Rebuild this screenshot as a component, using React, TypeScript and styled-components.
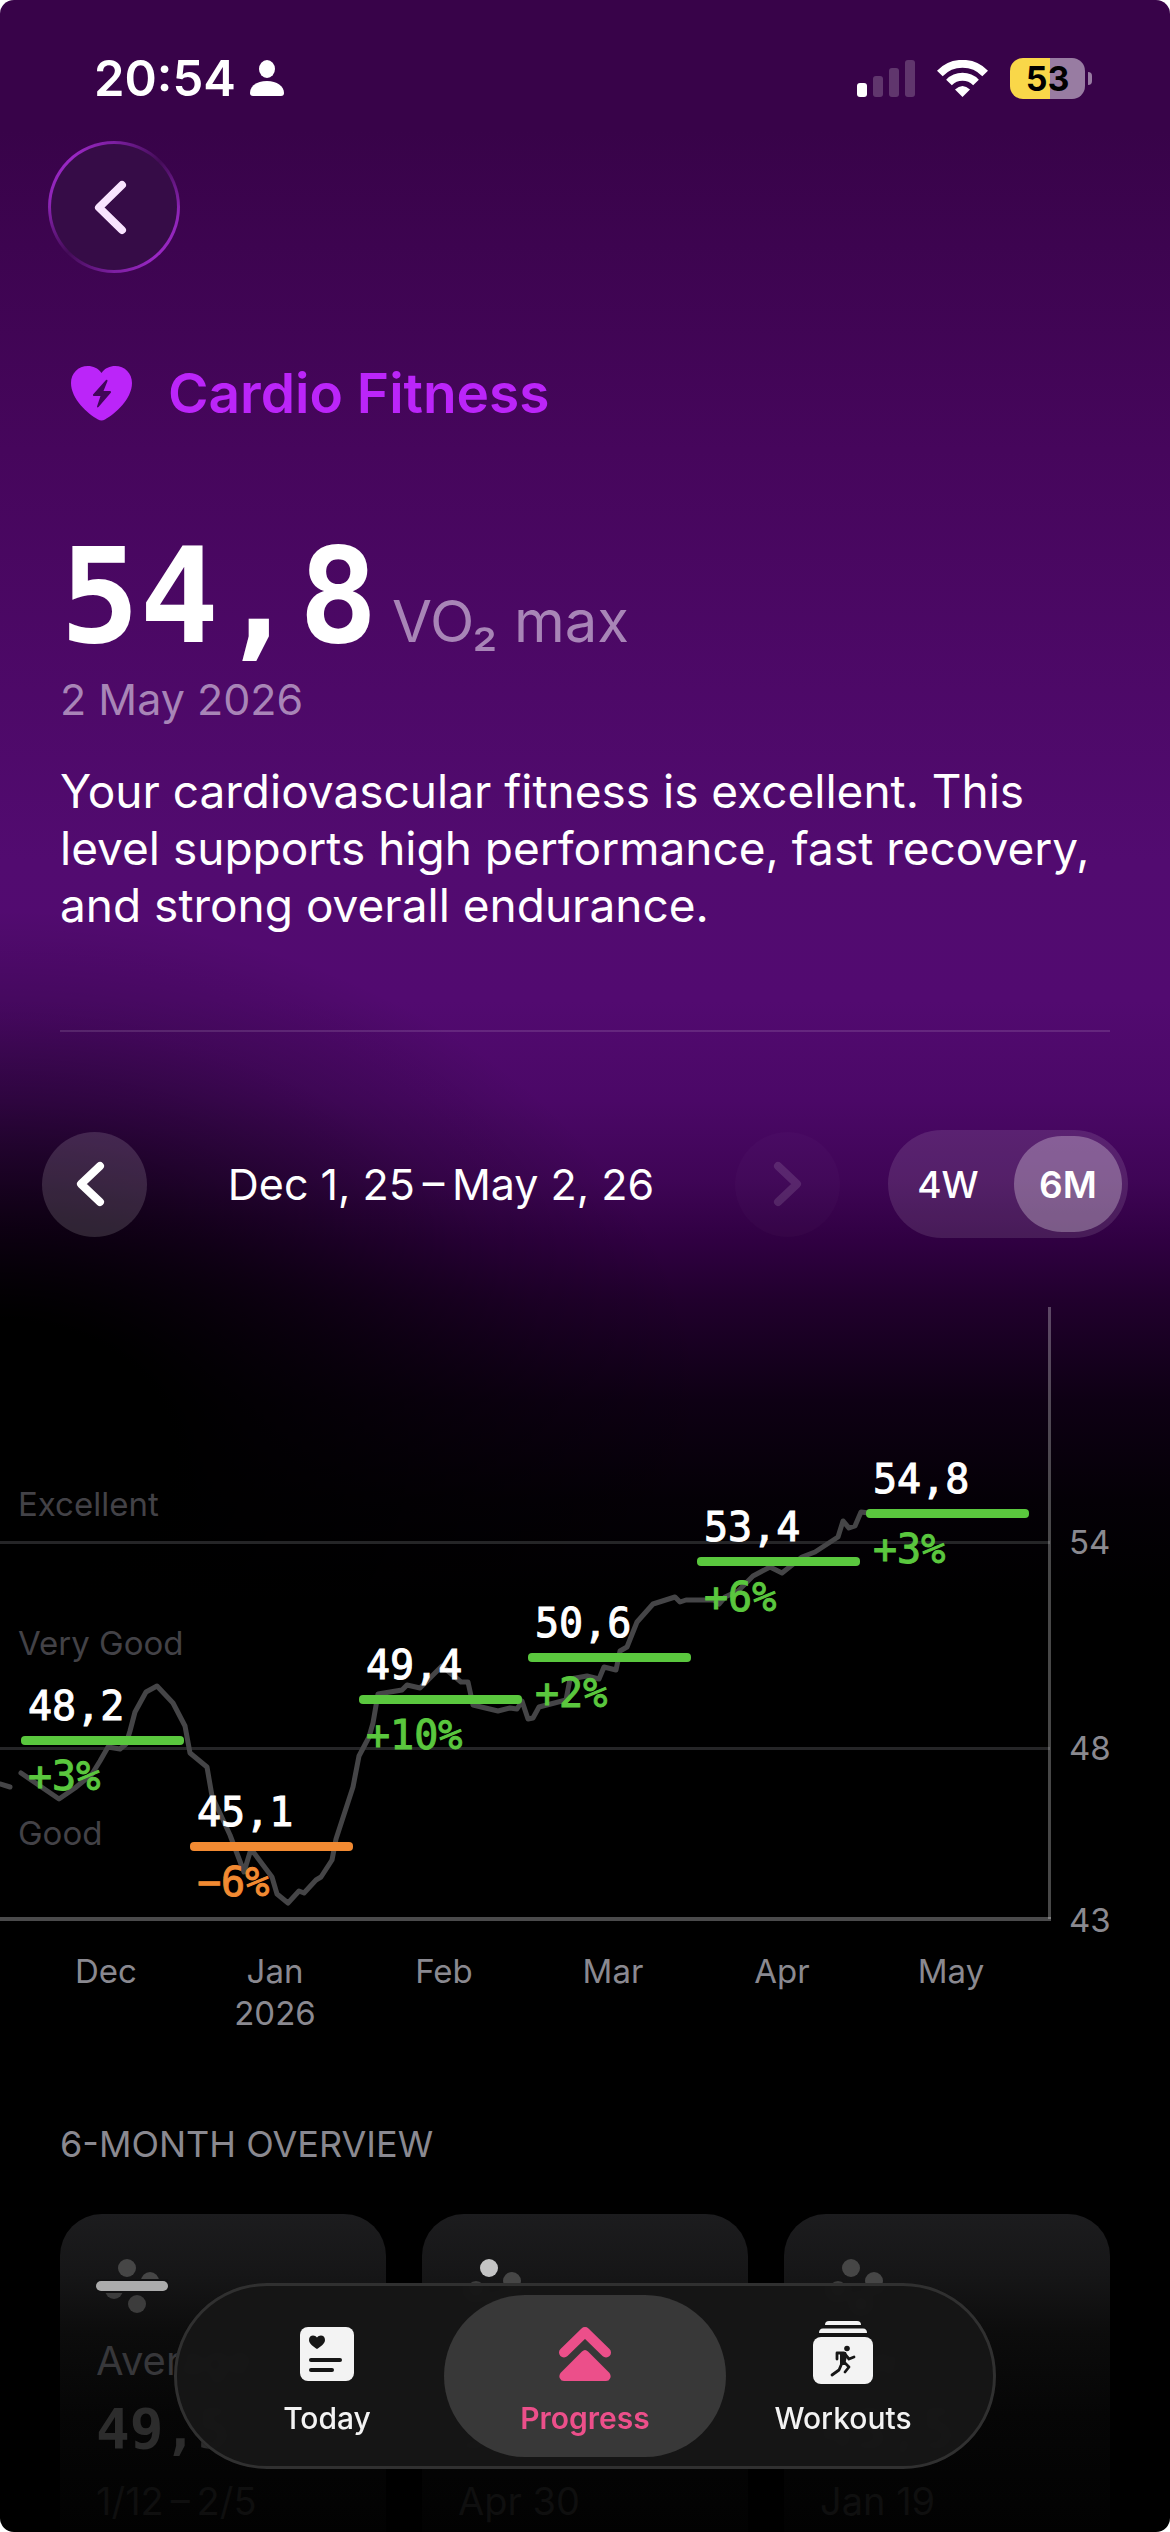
import React from "react";
import styled, { createGlobalStyle, css } from "styled-components";

const GlobalStyle = createGlobalStyle`
  * { box-sizing: border-box; }
  body { margin: 0; background: #fff; }
  button { font: inherit; color: inherit; border: 0; padding: 0; background: none; cursor: pointer; }
  h1, h2, p { margin: 0; font-weight: 400; }
`;

const sans = `Inter, "Liberation Sans", sans-serif`;
const mono = `"DejaVu Sans Mono", "Liberation Mono", monospace`;

const Screen = styled.main`
  position: relative;
  display: flex;
  flex-direction: column;
  height: 100vh;
  overflow: hidden;
  border-radius: 14px;
  color: #fff;
  font-family: ${sans};
  background:
    radial-gradient(ellipse 660px 500px at 0 1450px, #000 26%, rgba(0, 0, 0, 0.8) 40%, rgba(0, 0, 0, 0.64) 52%, rgba(0, 0, 0, 0.4) 69%, rgba(0, 0, 0, 0.18) 86%, rgba(0, 0, 0, 0) 108%),
    linear-gradient(#380349 0, #380349 130px, #46065c 450px, #520b70 860px, #520a70 1000px, #4b0867 1100px, #3f0556 1180px, #300042 1240px, #21002d 1300px, #0e0014 1400px, #040006 1500px, #000 1600px);

  & > * {
    flex: none;
  }
`;

const StatusBar = styled.header`
  display: flex;
  justify-content: space-between;
  align-items: center;
  height: 156px;
  padding: 0 78px 0 94px;
`;

const StatusGroup = styled.div`
  display: flex;
  align-items: center;
  gap: 22px;
`;

const Clock = styled.time`
  display: flex;
  align-items: center;
  gap: 14px;
  font-size: 49px;
  font-weight: 600;
`;

const Battery = styled.div`
  display: flex;
  align-items: center;
  gap: 3px;
`;

const BatteryLevel = styled.div`
  width: 75px;
  height: 41px;
  border-radius: 13px;
  background: linear-gradient(90deg, #f9d749 54%, #987ca2 54%);
  color: #000;
  font-size: 34px;
  font-weight: 700;
  line-height: 41px;
  text-align: center;
`;

const BatteryTip = styled.div`
  width: 4px;
  height: 13px;
  border-radius: 0 4px 4px 0;
  background: #987ca2;
`;

const BackButton = styled.button`
  display: grid;
  place-items: center;
  width: 132px;
  height: 132px;
  margin: -15px 0 0 48px;
  padding-right: 8px;
  border: 3px solid transparent;
  border-radius: 50%;
  color: #f9e4ff;
  background:
    linear-gradient(#360c47, #360c47) padding-box,
    conic-gradient(from 0deg, #7d1fa2, #440c58 45deg, #8f25b8 95deg, #9a27c4 140deg, #7d1fa2 180deg, #440c58 225deg, #8f25b8 275deg, #9a27c4 320deg, #7d1fa2) border-box;
`;

const Summary = styled.section`
  margin: 0 60px;
  padding: 80px 0 96px;
  border-bottom: 2px solid rgba(255, 255, 255, 0.12);
`;

const Title = styled.h1`
  display: flex;
  align-items: center;
  gap: 36px;
  padding-left: 11px;
  color: #bb25f9;
  font-size: 55px;
  font-weight: 600;
  line-height: 80px;
`;

const Reading = styled.p`
  display: flex;
  align-items: baseline;
  gap: 14px;
  margin-top: 88px;
  line-height: 150px;
`;

const ReadingValue = styled.strong`
  font-family: ${mono};
  font-size: 132px;
  font-weight: 700;
`;

const ReadingUnit = styled.span`
  color: #a885b7;
  font-size: 58px;
  line-height: 60px;
`;

const ReadingDate = styled.p`
  color: #a885b7;
  font-size: 43px;
  line-height: 56px;
`;

const Message = styled.p`
  margin-top: 36px;
  font-size: 46px;
  line-height: 57px;
`;

const RangeBar = styled.nav`
  display: grid;
  grid-template-columns: 105px 1fr 105px 288px;
  align-items: center;
  padding: 98px 42px 0;
`;

const StepButton = styled.button`
  display: grid;
  place-items: center;
  width: 105px;
  height: 105px;
  padding-right: 8px;
  border-radius: 50%;
  background: rgba(255, 255, 255, 0.14);

  &:disabled {
    padding: 0;
    color: rgba(255, 255, 255, 0.12);
    background: rgba(255, 255, 255, 0.02);
  }
`;

const RangeLabel = styled.span`
  font-size: 43px;
  text-align: center;
  white-space: nowrap;
`;

const Segments = styled.div`
  display: flex;
  justify-content: space-between;
  justify-self: end;
  width: 240px;
  height: 108px;
  padding: 6px;
  border-radius: 54px;
  background: rgba(255, 255, 255, 0.11);
`;

const Segment = styled.button<{ $active?: boolean }>`
  width: 108px;
  border-radius: 48px;
  font-size: 37px;
  font-weight: ${(p) => (p.$active ? 600 : 500)};
  background: ${(p) => (p.$active ? "rgba(255, 255, 255, 0.28)" : "transparent")};
`;

const Chart = styled.svg`
  display: block;
  width: 100%;
  margin-top: 62px;
`;

const AxisText = styled.text`
  fill: #8a8990;
  font-family: ${sans};
  font-size: 33px;
`;

const ZoneText = styled.text`
  fill: #434247;
  font-family: ${sans};
  font-size: 33px;
`;

const PointText = styled.text`
  fill: currentColor;
  stroke: currentColor;
  stroke-width: 1px;
  font-family: ${mono};
  font-size: 40px;
`;

const Overview = styled.section`
  padding: 80px 60px 0;
`;

const OverviewTitle = styled.h2`
  color: #8a8990;
  font-size: 36px;
  line-height: 48px;
  text-transform: uppercase;
`;

const Cards = styled.div`
  display: grid;
  grid-template-columns: repeat(3, 1fr);
  gap: 36px;
  margin-top: 46px;
`;

const Card = styled.article`
  display: flex;
  flex-direction: column;
  align-items: flex-start;
  height: 360px;
  padding: 43px 36px 0;
  border-radius: 42px;
  background: linear-gradient(#1c1c1e 0, #161617 60px, #0c0c0c 120px, #060606 200px, #020202 320px);
`;

const CardLabel = styled.span`
  margin-top: 18px;
  color: #37373a;
  font-size: 40px;
  line-height: 56px;
`;

const CardValue = styled.strong`
  color: #2c2c2c;
  font-family: ${mono};
  font-size: 56px;
  line-height: 80px;
`;

const CardDate = styled.span`
  margin-top: 4px;
  color: #0f0f0f;
  font-size: 38px;
  line-height: 56px;
`;

const TabBar = styled.nav`
  position: absolute;
  bottom: 63px;
  left: 50%;
  transform: translateX(-50%);
  display: grid;
  grid-template-columns: repeat(3, 1fr);
  width: 822px;
  height: 186px;
  padding: 9px 21px;
  border: 3px solid #303030;
  border-radius: 93px;
  background: rgba(22, 22, 22, 0.96);
  backdrop-filter: blur(4px);
`;

const Tab = styled.button<{ $active?: boolean }>`
  display: flex;
  flex-direction: column;
  align-items: center;
  justify-content: flex-end;
  gap: 16px;
  height: 162px;
  padding-bottom: 21px;
  border-radius: 81px;
  color: #f3f3f3;
  font-size: 30px;
  font-weight: 500;
  line-height: 36px;
  ${(p) =>
    p.$active &&
    css`
      margin: 0 -12px;
      color: #ec4f8a;
      background: #383838;
      font-weight: 600;
    `}
`;

const months = [
  { label: "Dec", value: "48,2", change: "+3%", y: 440 },
  { label: "Jan", value: "45,1", change: "−6%", y: 546, year: "2026", down: true },
  { label: "Feb", value: "49,4", change: "+10%", y: 399 },
  { label: "Mar", value: "50,6", change: "+2%", y: 357 },
  { label: "Apr", value: "53,4", change: "+6%", y: 261 },
  { label: "May", value: "54,8", change: "+3%", y: 213 },
];

const trend =
  "M0 484L10 487M21 473L59 499L75 488L92 474L100 461L108 447L120 449L126 444L130 431L135 412L146 392L157 386L173 403L185 426L190 453L207 467L212 496L230 535L244 572L251 549L272 577L277 594L288 603L299 591L304 593L316 580L321 577L332 560L336 539L353 487L359 456L369 437L373 423L378 394L402 390L407 385L420 388L442 366L461 382L468 382L473 405L498 411L510 408L517 409L522 401L528 419L533 418L539 407L566 400L570 379L587 376L599 379L604 367L616 370L620 351L627 347L637 322L653 304L675 297L680 302L686 300L714 300L719 304L725 297L738 291L753 276L770 267L782 273L802 257L815 252L838 237L843 221L849 228L855 226L861 212L869 213";

const Chevron = ({ w, h, stroke, right }: { w: number; h: number; stroke: number; right?: boolean }) => (
  <svg width={w + 16} height={h + 16} viewBox={`-8 -8 ${w + 16} ${h + 16}`} fill="none" stroke="currentColor" strokeWidth={stroke} strokeLinecap="round" strokeLinejoin="round" aria-hidden>
    <path d={right ? `M0 0L${w} ${h / 2}L0 ${h}` : `M${w} 0L0 ${h / 2}L${w} ${h}`} />
  </svg>
);

const CardIcon = ({ kind }: { kind: "average" | "high" | "low" }) => {
  const dim = "#464646";
  return (
    <svg width="72" height="58" viewBox="0 0 72 58" aria-hidden>
      <circle cx="31" cy="11" r="9" fill={kind === "high" ? "#c4c4c4" : dim} />
      <circle cx="54" cy="24" r="9" fill={dim} />
      <circle cx="18" cy="33" r="9" fill="#3c3c3c" />
      <circle cx="41" cy="47" r="9" fill="#3c3c3c" />
      {kind === "average" && (
        <>
          <rect y="22" width="72" height="14" fill="#121213" />
          <rect y="24" width="72" height="10" rx="5" fill="#acacac" />
        </>
      )}
    </svg>
  );
};

const MonthChart = () => (
  <Chart viewBox="0 0 1170 740" role="img" aria-label="VO₂ max by month">
    <g fill="#252527">
      <rect y="241" width="1050" height="3" />
      <rect y="447" width="1050" height="3" />
    </g>
    <rect y="617" width="1051" height="4" fill="#4a4a4b" />
    <rect x="1048" y="7" width="3" height="612" fill="#fff" opacity="0.28" />
    <ZoneText x="18" y="216">Excellent</ZoneText>
    <ZoneText x="18" y="355">Very Good</ZoneText>
    <ZoneText x="18" y="545">Good</ZoneText>
    <AxisText x="1069" y="254">54</AxisText>
    <AxisText x="1069" y="460">48</AxisText>
    <AxisText x="1069" y="632">43</AxisText>
    <path d={trend} fill="none" stroke="#454547" strokeWidth="5" strokeLinejoin="round" strokeLinecap="round" />
    {months.map((m, i) => {
      const x = 21 + i * 169;
      const tone = m.down ? "#f28a32" : "#5ac73e";
      return (
        <g key={m.label}>
          <rect x={x} y={m.y - 4} width="163" height="9" rx="4" fill={tone} />
          <PointText x={x + 7} y={m.y - 20} color="#fff">{m.value}</PointText>
          <PointText x={x + 7} y={m.y + 50} color={tone}>{m.change}</PointText>
          <AxisText x={x + 85} y="683" textAnchor="middle">{m.label}</AxisText>
          {m.year && <AxisText x={x + 85} y="725" textAnchor="middle">{m.year}</AxisText>}
        </g>
      );
    })}
  </Chart>
);

const PersonIcon = () => (
  <svg width="34" height="37" viewBox="0 0 34 37" fill="currentColor" aria-hidden>
    <ellipse cx="17" cy="9" rx="8" ry="9" />
    <path d="M3 36C1 36 0 35 0 33C0 26 7 21 17 21S34 26 34 33C34 35 33 36 31 36Z" />
  </svg>
);

const SignalIcon = () => (
  <svg width="58" height="37" viewBox="0 0 58 37" fill="#fff" aria-hidden>
    <rect y="23" width="10" height="14" rx="3" />
    <g opacity="0.2">
      <rect x="16" y="16" width="10" height="21" rx="3" />
      <rect x="32" y="8" width="10" height="29" rx="3" />
      <rect x="48" width="10" height="37" rx="3" />
    </g>
  </svg>
);

const WifiIcon = () => (
  <svg width="51" height="37" viewBox="0 0 51 37" aria-hidden>
    <g fill="none" stroke="#fff" strokeWidth="8">
      <path d="M2.800 13.500A31.500 31.500 0 0 1 48.200 13.500" />
      <path d="M12 22.500A19 19 0 0 1 39 22.500" />
    </g>
    <path d="M18 29.500Q25.500 22.500 33 29.500L25.500 37Z" fill="#fff" />
  </svg>
);

const HeartIcon = () => (
  <svg width="61" height="55" viewBox="0 0 61 55" aria-hidden>
    <path d="M30.500 7C34 2 39 0 44 0C54 0 61 7.500 61 17C61 33 44 48 34 53.500Q30.500 55.500 27 53.500C17 48 0 33 0 17C0 7.500 7 0 17 0C22 0 27 2 30.500 7Z" fill="currentColor" />
    <path d="M35 14L22 28.500Q21.500 30 23 30H29.500L26 40.500Q26 42 27.500 41L40 26.500Q40.500 25 39 25H32.500L36.500 15Q36.500 13 35 14Z" fill="#41065a" />
  </svg>
);

const TodayIcon = () => (
  <svg width="54" height="57" viewBox="0 0 54 57" aria-hidden>
    <rect width="54" height="54" rx="8" fill="currentColor" />
    <g fill="#161616">
      <path d="M17 10.500C19 7.500 25 7.500 25 13C25 17 20 20 17 22C14 20 9 17 9 13C9 7.500 15 7.500 17 10.500Z" />
      <rect x="9" y="31" width="33" height="4" rx="2" />
      <rect x="9" y="41" width="25" height="4" rx="2" />
    </g>
  </svg>
);

const ProgressIcon = () => (
  <svg width="52" height="57" viewBox="0 0 52 57" aria-hidden>
    <path d="M5 25.500L26 5L47 25.500" fill="none" stroke="currentColor" strokeWidth="10" strokeLinecap="round" strokeLinejoin="round" />
    <path d="M23 24.500Q26 21.500 29 24.500L50.500 46Q52.500 49 51 51.500Q50 54 47 54H5Q2 54 1 51.500Q-.500 49 1.500 46Z" fill="currentColor" />
  </svg>
);

const WorkoutsIcon = () => (
  <svg width="60" height="63" viewBox="0 0 60 63" aria-hidden>
    <g fill="currentColor">
      <path d="M12 4Q12 0 16 0H44Q48 0 48 4Z" />
      <path d="M6 12Q6 7.500 10 7.500H50Q54 7.500 54 12Z" />
      <rect y="16" width="60" height="47" rx="8" />
    </g>
    <g fill="none" stroke="#161616" strokeWidth="2.800" strokeLinecap="round" strokeLinejoin="round">
      <path d="M24 38V32H31L36 38L41 36" />
      <path d="M29 42L26 49L19 54" />
      <path d="M31 41L36 46L32 51" />
    </g>
    <path d="M27 31H33L34 35L32 44H27Z" fill="#161616" />
    <circle cx="34" cy="27.500" r="2.800" fill="#161616" />
  </svg>
);

export default function App() {
  return (
    <>
      <GlobalStyle />
      <Screen>
        <StatusBar>
          <Clock>
            20:54
            <PersonIcon />
          </Clock>
          <StatusGroup>
            <SignalIcon />
            <WifiIcon />
            <Battery>
              <BatteryLevel>53</BatteryLevel>
              <BatteryTip />
            </Battery>
          </StatusGroup>
        </StatusBar>
        <BackButton aria-label="Back">
          <Chevron w={23} h={45} stroke={8} />
        </BackButton>
        <Summary>
          <Title>
            <HeartIcon />
            Cardio Fitness
          </Title>
          <Reading>
            <ReadingValue>54,8</ReadingValue>
            <ReadingUnit>VO₂ max</ReadingUnit>
          </Reading>
          <ReadingDate>2 May 2026</ReadingDate>
          <Message>
            Your cardiovascular fitness is excellent. This level supports high performance, fast recovery, and strong overall endurance.
          </Message>
        </Summary>
        <RangeBar aria-label="Chart range">
          <StepButton aria-label="Previous period">
            <Chevron w={19} h={36} stroke={8} />
          </StepButton>
          <RangeLabel>Dec 1, 25&#8201;–&#8201;May 2, 26</RangeLabel>
          <StepButton aria-label="Next period" disabled>
            <Chevron w={19} h={36} stroke={8} right />
          </StepButton>
          <Segments>
            <Segment>4W</Segment>
            <Segment $active aria-pressed="true">6M</Segment>
          </Segments>
        </RangeBar>
        <MonthChart />
        <Overview>
          <OverviewTitle>6-month overview</OverviewTitle>
          <Cards>
            <Card>
              <CardIcon kind="average" />
              <CardLabel>Average</CardLabel>
              <CardValue>49,5</CardValue>
              <CardDate>1/12&#8201;–&#8201;2/5</CardDate>
            </Card>
            <Card>
              <CardIcon kind="high" />
              <CardLabel>High</CardLabel>
              <CardValue>54,8</CardValue>
              <CardDate>Apr 30</CardDate>
            </Card>
            <Card>
              <CardIcon kind="low" />
              <CardLabel>Low</CardLabel>
              <CardValue>43,5</CardValue>
              <CardDate>Jan 19</CardDate>
            </Card>
          </Cards>
        </Overview>
        <TabBar aria-label="Main">
          <Tab>
            <TodayIcon />
            Today
          </Tab>
          <Tab $active aria-current="page">
            <ProgressIcon />
            Progress
          </Tab>
          <Tab>
            <WorkoutsIcon />
            Workouts
          </Tab>
        </TabBar>
      </Screen>
    </>
  );
}
